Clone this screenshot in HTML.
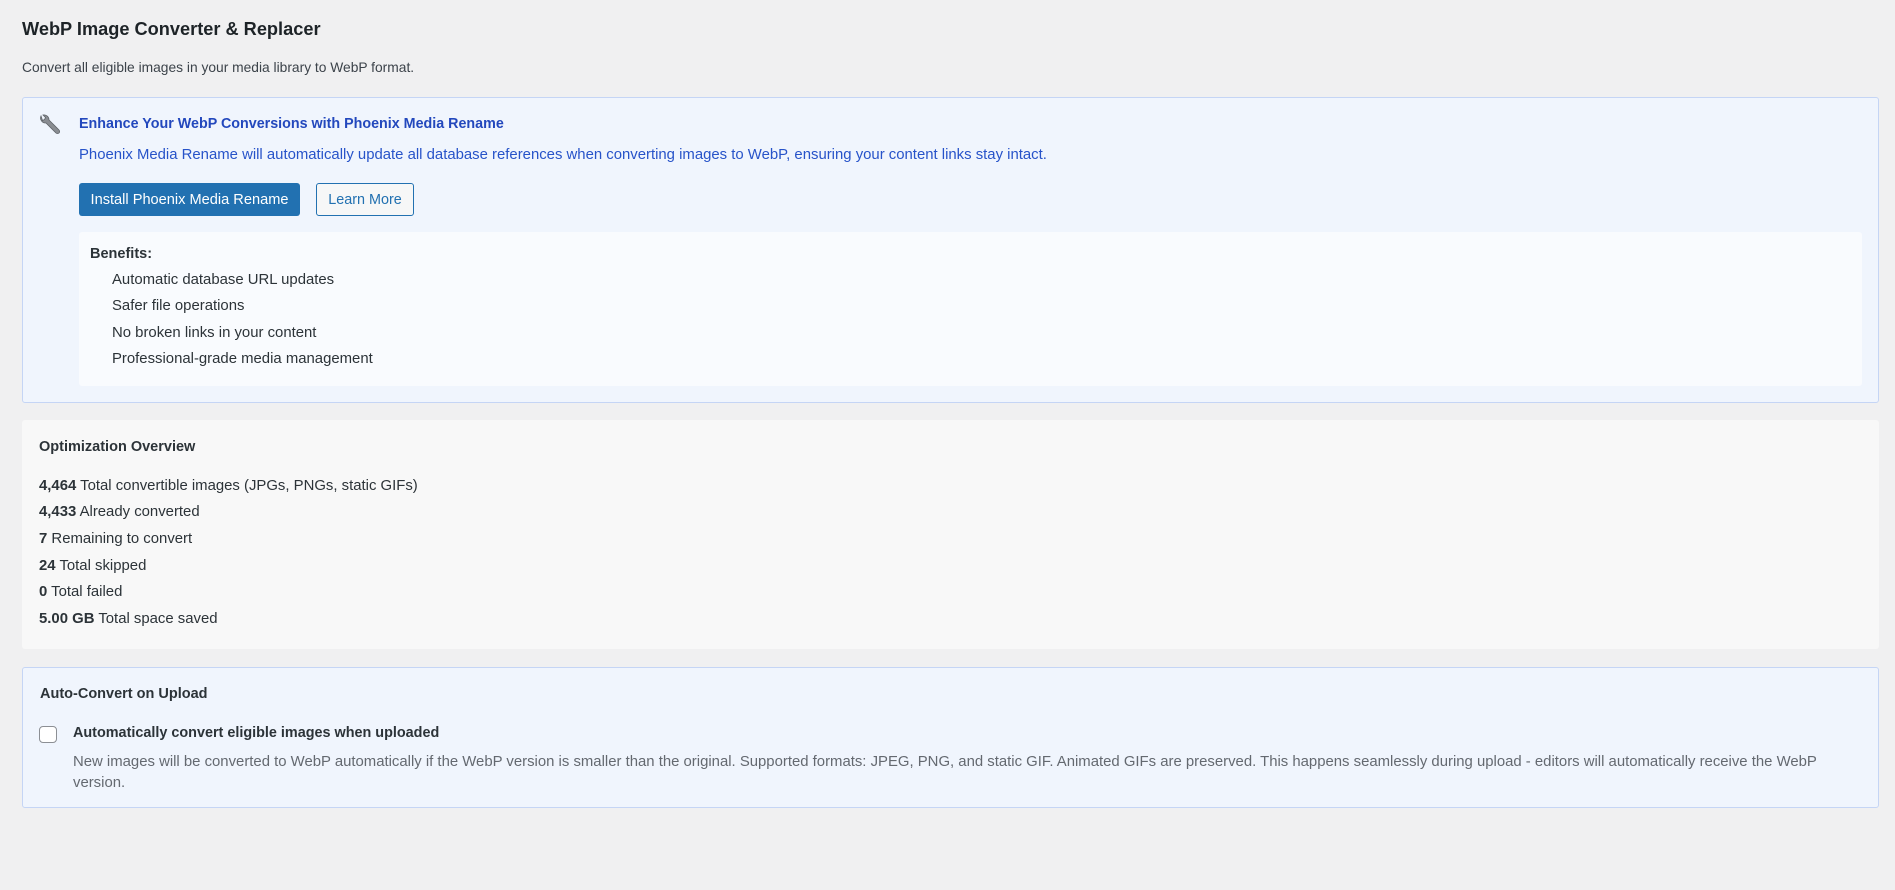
<!DOCTYPE html>
<html><head><meta charset="utf-8"><style>
*{margin:0;padding:0;box-sizing:border-box}
body{width:1895px;height:890px;background:#f0f0f1;font-family:"Liberation Sans",sans-serif;color:#1d2327;position:relative;overflow:hidden}
.a{position:absolute;white-space:nowrap;line-height:1}
.box{position:absolute;border-radius:3px}
.btn{display:flex;align-items:center;justify-content:center}
</style></head><body>
<div class="a" style="left:22px;top:20px;font-size:18.2px;font-weight:bold;">WebP Image Converter &amp; Replacer</div>
<div class="a" style="left:22px;top:61px;font-size:13.8px;color:#3c434a">Convert all eligible images in your media library to WebP format.</div>

<div class="box" style="left:22px;top:97px;width:1857px;height:306px;background:#f0f5fd;border:1px solid #c5d5f5"></div>
<svg class="a" style="left:37px;top:113px" width="26" height="24" viewBox="0 0 26 24"><path d="M4 3 a5 5 0 0 0 5 7 L19 20 a2 2 0 0 0 3 -3 L12 7 a5 5 0 0 0 -6 -5 l2.5 2.5 -1 2 -2 1z" fill="#8a8d92" stroke="#5d6166" stroke-width="0.8"/></svg>
<div class="a" style="left:79px;top:117px;font-size:14.3px;font-weight:bold;color:#2348bd">Enhance Your WebP Conversions with Phoenix Media Rename</div>
<div class="a" style="left:79px;top:148px;font-size:14.9px;color:#2753c9">Phoenix Media Rename will automatically update all database references when converting images to WebP, ensuring your content links stay intact.</div>
<div class="box btn" style="left:79px;top:183px;width:221px;height:33px;background:#2271b1;color:#fff;font-size:14.6px">Install Phoenix Media Rename</div>
<div class="box btn" style="left:316px;top:183px;width:98px;height:33px;background:#f6f7f7;border:1px solid #2271b1;color:#2271b1;font-size:14.4px">Learn More</div>
<div class="box" style="left:79px;top:232px;width:1783px;height:154px;background:#f9fbfe"></div>
<div class="a" style="left:90px;top:247px;font-size:14.5px;font-weight:bold;color:#2c3338">Benefits:</div>
<div class="a" style="left:112px;top:273px;font-size:14.9px;color:#2c3338">Automatic database URL updates</div>
<div class="a" style="left:112px;top:299px;font-size:14.9px;color:#2c3338">Safer file operations</div>
<div class="a" style="left:112px;top:326px;font-size:14.9px;color:#2c3338">No broken links in your content</div>
<div class="a" style="left:112px;top:352px;font-size:14.9px;color:#2c3338">Professional-grade media management</div>

<div class="box" style="left:22px;top:420px;width:1857px;height:229px;background:#f8f8f8"></div>
<div class="a" style="left:39px;top:440px;font-size:14.5px;font-weight:bold;color:#2c3338">Optimization Overview</div>
<div class="a" style="left:39px;top:479px;font-size:14.9px;color:#2c3338"><b>4,464</b> Total convertible images (JPGs, PNGs, static GIFs)</div>
<div class="a" style="left:39px;top:505px;font-size:14.9px;color:#2c3338"><b>4,433</b> Already converted</div>
<div class="a" style="left:39px;top:532px;font-size:14.9px;color:#2c3338"><b>7</b> Remaining to convert</div>
<div class="a" style="left:39px;top:559px;font-size:14.9px;color:#2c3338"><b>24</b> Total skipped</div>
<div class="a" style="left:39px;top:585px;font-size:14.9px;color:#2c3338"><b>0</b> Total failed</div>
<div class="a" style="left:39px;top:612px;font-size:14.9px;color:#2c3338"><b>5.00 GB</b> Total space saved</div>

<div class="box" style="left:22px;top:667px;width:1857px;height:141px;background:#f0f5fd;border:1px solid #c5d5f5"></div>
<div class="a" style="left:40px;top:687px;font-size:14.5px;font-weight:bold;color:#2c3338">Auto-Convert on Upload</div>
<div class="box" style="left:39px;top:726px;width:18px;height:17px;background:#fff;border:1px solid #8c8f94;border-radius:4px"></div>
<div class="a" style="left:73px;top:726px;font-size:14.4px;font-weight:bold;color:#2c3338">Automatically convert eligible images when uploaded</div>
<div class="a" style="left:73px;top:752px;font-size:14.9px;color:#646970;line-height:21px">New images will be converted to WebP automatically if the WebP version is smaller than the original. Supported formats: JPEG, PNG, and static GIF. Animated GIFs are preserved. This happens seamlessly during upload - editors will automatically receive the WebP<br>version.</div>
</body></html>
